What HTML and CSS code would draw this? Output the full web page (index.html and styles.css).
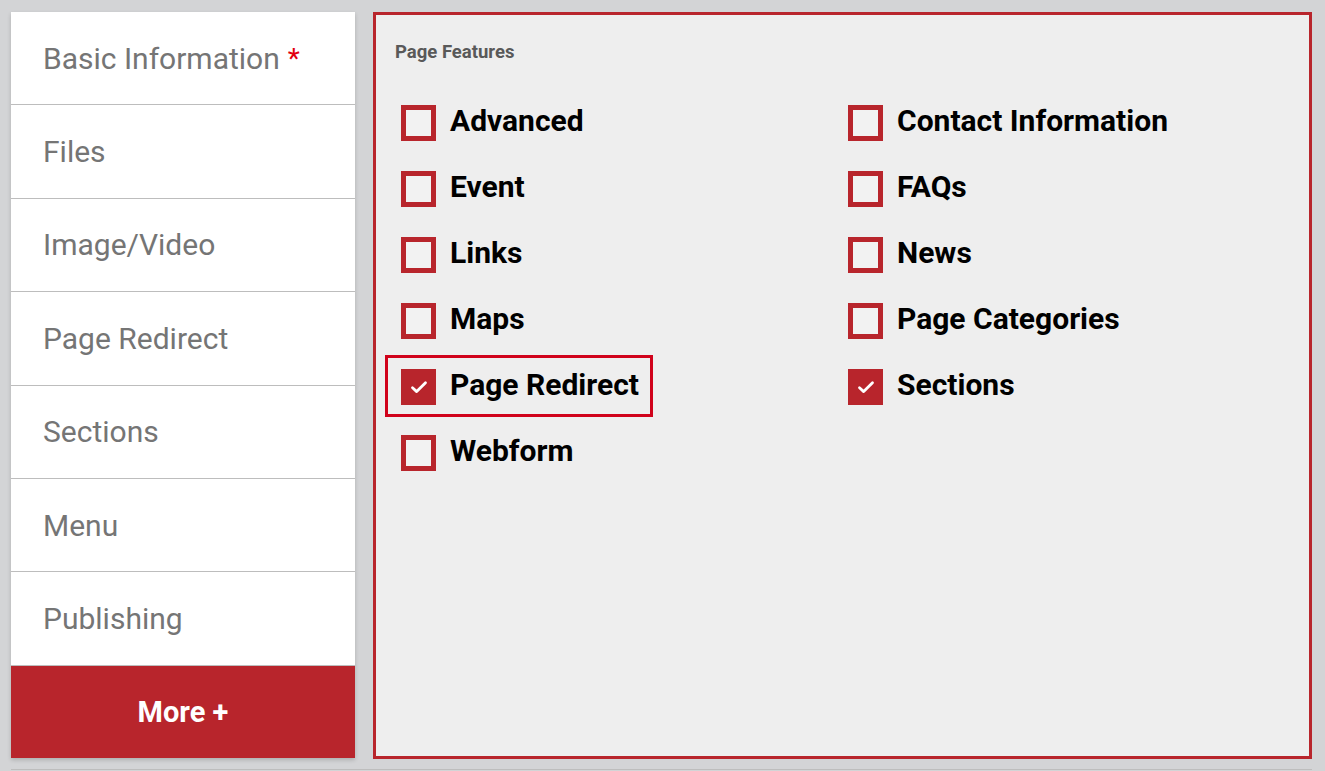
FILE: index.html
```html
<!DOCTYPE html>
<html lang="en">
<head>
<meta charset="utf-8">
<title>Page Features</title>
<link rel="stylesheet" href="styles.css">
</head>
<body>
<div class="layout">
  <nav class="sidebar">
    <div class="nav-item">Basic Information <span class="req">*</span></div>
    <div class="nav-item">Files</div>
    <div class="nav-item">Image/Video</div>
    <div class="nav-item">Page Redirect</div>
    <div class="nav-item">Sections</div>
    <div class="nav-item">Menu</div>
    <div class="nav-item">Publishing</div>
    <div class="nav-item more">More +</div>
  </nav>
  <main class="panel">
    <div class="panel-title">Page Features</div>
    <div class="features">
      <label class="feature"><span class="box"></span><span class="label">Advanced</span></label>
      <label class="feature"><span class="box"></span><span class="label">Contact Information</span></label>
      <label class="feature"><span class="box"></span><span class="label">Event</span></label>
      <label class="feature"><span class="box"></span><span class="label">FAQs</span></label>
      <label class="feature"><span class="box"></span><span class="label">Links</span></label>
      <label class="feature"><span class="box"></span><span class="label">News</span></label>
      <label class="feature"><span class="box"></span><span class="label">Maps</span></label>
      <label class="feature"><span class="box"></span><span class="label">Page Categories</span></label>
      <label class="feature highlighted"><span class="box checked"><svg viewBox="0 0 20 20" width="20" height="20"><path d="M3.5 10.8l4.2 3.8L16.5 5.8" fill="none" stroke="#fff" stroke-width="2.8" stroke-linecap="round" stroke-linejoin="round"/></svg></span><span class="label">Page Redirect</span></label>
      <label class="feature"><span class="box checked"><svg viewBox="0 0 20 20" width="20" height="20"><path d="M3.5 10.8l4.2 3.8L16.5 5.8" fill="none" stroke="#fff" stroke-width="2.8" stroke-linecap="round" stroke-linejoin="round"/></svg></span><span class="label">Sections</span></label>
      <label class="feature"><span class="box"></span><span class="label">Webform</span></label>
    </div>
  </main>
</div>
<div class="footer-line"></div>
</body>
</html>
```

FILE: styles.css
```css
html, body {
  margin: 0;
  padding: 0;
}
body {
  background: #d3d4d6;
  font-family: Roboto, "Liberation Sans", Arial, sans-serif;
  width: 1325px;
  height: 771px;
  overflow: hidden;
}
.layout {
  display: flex;
  gap: 18px;
  padding: 12px 13px 0 11px;
  height: 747px;
}
.sidebar {
  width: 344px;
  height: 746px;
  display: flex;
  flex-direction: column;
  background: #fff;
  box-shadow: 0 2px 4px rgba(0, 0, 0, 0.18);
}
.nav-item {
  flex: 1;
  display: flex;
  align-items: center;
  padding-left: 32px;
  font-size: 30px;
  color: #757575;
  border-bottom: 1px solid #bdbdbd;
}
.nav-item .req {
  color: #e2000f;
  margin-left: 8px;
  font-size: 28px;
}
.nav-item.more {
  border-bottom: none;
  background: #b8252c;
  color: #fff;
  font-weight: 700;
  font-size: 29px;
  justify-content: center;
  padding-left: 0;
}
.panel {
  flex: 1;
  box-sizing: border-box;
  height: 747px;
  border: 3px solid #b8252c;
  background: #eeeeee;
  padding: 26px 19px 0 19px;
}
.panel-title {
  font-size: 18.5px;
  font-weight: 700;
  color: #595959;
  line-height: 22px;
}
.features {
  display: grid;
  grid-template-columns: 447px 1fr;
  grid-auto-rows: 36px;
  row-gap: 30px;
  margin-top: 42px;
  margin-left: 6px;
}
.feature {
  display: flex;
  align-items: center;
  gap: 14px;
  justify-self: start;
  position: relative;
}
.box {
  box-sizing: border-box;
  width: 35px;
  height: 36px;
  border: 5px solid #b8252c;
  background: #f2f2f2;
  display: flex;
  align-items: center;
  justify-content: center;
  flex-shrink: 0;
}
.box.checked {
  background: #b8252c;
}
.label {
  font-size: 30px;
  font-weight: 700;
  color: #000;
  line-height: 36px;
  padding-bottom: 4px;
}
.highlighted::after {
  content: "";
  position: absolute;
  top: -14px;
  bottom: -12px;
  left: -16px;
  right: -14px;
  border: 3px solid #d0021b;
}
.footer-line {
  margin: 10px 13px 0 11px;
  height: 1px;
  background: #bdbdbd;
}
```
